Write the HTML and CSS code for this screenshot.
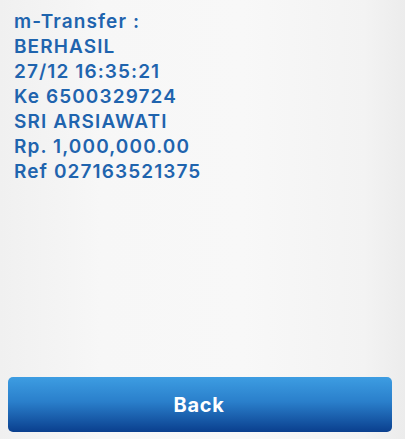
FILE: index.html
```html
<!DOCTYPE html>
<html>
<head>
<meta charset="utf-8">
<link rel="stylesheet" href="styles.css">
</head>
<body>
<div class="screen">
  <div class="message">
    <div class="line">m-Transfer :</div>
    <div class="line">BERHASIL</div>
    <div class="line">27/12 16:35:21</div>
    <div class="line">Ke 6500329724</div>
    <div class="line">SRI ARSIAWATI</div>
    <div class="line">Rp. 1,000,000.00</div>
    <div class="line">Ref 027163521375</div>
  </div>
  <div class="footer">
    <button class="back">Back</button>
  </div>
</div>
</body>
</html>
```
FILE: styles.css
```css
html, body {
  margin: 0;
  padding: 0;
}
body {
  width: 405px;
  height: 439px;
  overflow: hidden;
  background: linear-gradient(90deg, #f0f0f0 0%, #f7f7f7 25%, #f8f8f8 60%, #f3f3f3 90%, #ececec 100%);
  font-family: Inter, "Liberation Sans", sans-serif;
}
.screen {
  height: 439px;
  display: flex;
  flex-direction: column;
  justify-content: space-between;
}
.message {
  padding: 9px 0 0 14px;
  color: #1f64ae;
  font-size: 19px;
  font-weight: 600;
  line-height: 25px;
  letter-spacing: 1.1px;
}
.footer {
  padding: 0 13px 7px 8px;
}
.back {
  display: block;
  width: 100%;
  height: 55px;
  border: none;
  border-radius: 5px;
  background: linear-gradient(180deg, #3d9de2 0%, #2a7fcb 45%, #0a3f8e 100%);
  color: #ffffff;
  font-family: Inter, "Liberation Sans", sans-serif;
  font-size: 20px;
  font-weight: 700;
  letter-spacing: 0.7px;
  padding: 0 2px 0 0;
}
```
